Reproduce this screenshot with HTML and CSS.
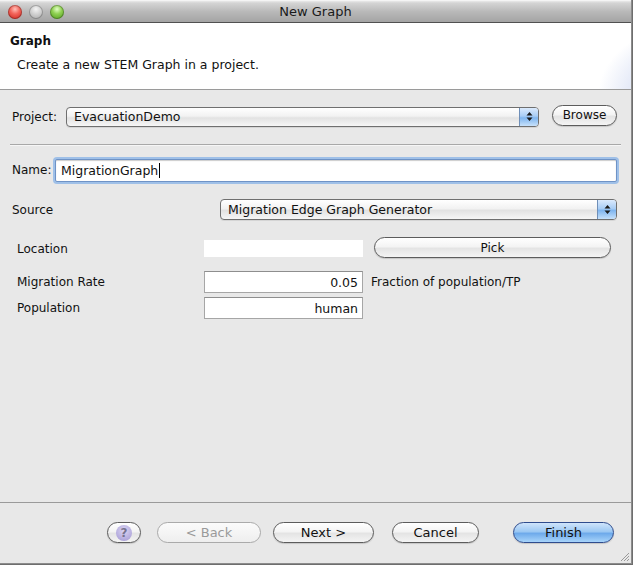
FILE: index.html
```html
<!DOCTYPE html>
<html>
<head>
<meta charset="utf-8">
<title>New Graph</title>
<link rel="stylesheet" href="styles.css">
</head>
<body>
<div class="window">
  <div class="titlebar">
    <div class="lights">
      <span class="light red"></span>
      <span class="light gray"></span>
      <span class="light green"></span>
    </div>
    <div class="title">New Graph</div>
  </div>
  <div class="header">
    <div class="h-title">Graph</div>
    <div class="h-desc">Create a new STEM Graph in a project.</div>
  </div>
  <div class="content">
    <div class="row project-row">
      <span class="lbl">Project:</span>
      <div class="combo project-combo">
        <span class="combo-text">EvacuationDemo</span>
        <span class="combo-arrow"><svg width="9" height="13" viewBox="0 0 9 13"><path d="M4.5 2 L7.5 5.5 L1.5 5.5 Z M4.5 11 L7.5 7.5 L1.5 7.5 Z" fill="#1a1a1a"/></svg></span>
      </div>
      <button class="btn browse">Browse</button>
    </div>
    <div class="sep"></div>
    <div class="row name-row">
      <span class="lbl">Name:</span>
      <div class="field focus"><span>MigrationGraph</span><span class="caret"></span></div>
    </div>
    <div class="row source-row">
      <span class="lbl">Source</span>
      <div class="combo source-combo">
        <span class="combo-text">Migration Edge Graph Generator</span>
        <span class="combo-arrow"><svg width="9" height="13" viewBox="0 0 9 13"><path d="M4.5 2 L7.5 5.5 L1.5 5.5 Z M4.5 11 L7.5 7.5 L1.5 7.5 Z" fill="#1a1a1a"/></svg></span>
      </div>
    </div>
    <div class="params">
      <span class="plbl loc-lbl">Location</span>
      <div class="pfield plain loc-field"></div>
      <button class="btn pick">Pick</button>
      <span class="plbl">Migration Rate</span>
      <div class="pfield">0.05</div>
      <span class="unit">Fraction of population/TP</span>
      <span class="plbl">Population</span>
      <div class="pfield">human</div>
      <span></span>
    </div>
  </div>
  <div class="footer">
    <button class="btn help"><span class="qmark">?</span></button>
    <button class="btn back" disabled>&lt; Back</button>
    <button class="btn next">Next &gt;</button>
    <button class="btn cancel">Cancel</button>
    <button class="btn finish">Finish</button>
    <svg class="grip" width="11" height="11" viewBox="0 0 11 11"><path d="M10 2 L2 10 M10 5 L5 10 M10 8 L8 10" stroke="#999" stroke-width="1"/></svg>
  </div>
</div>
</body>
</html>
```
FILE: styles.css
```css
* { box-sizing: border-box; }
html, body { margin: 0; padding: 0; }
body {
  background: #6e6e6e;
  font-family: "DejaVu Sans", "Liberation Sans", sans-serif;
  font-size: 12px;
  color: #111;
  width: 633px;
  height: 565px;
  overflow: hidden;
}
.window {
  width: 632px;
  height: 564px;
  background: #e8e8e8;
  border-right: 1px solid #8c8c8c;
  border-bottom: 1px solid #8c8c8c;
  display: flex;
  flex-direction: column;
}
.titlebar {
  height: 23px;
  flex: none;
  background: linear-gradient(#e9e9e9 0, #d4d4d4 2px, #b9b9b9 50%, #a4a4a4 100%);
  border-top: 1px solid #f4f4f4;
  border-bottom: 1px solid #515151;
  display: flex;
  align-items: center;
  position: relative;
}
.lights { display: flex; gap: 7px; padding-left: 8px; }
.light {
  width: 14px; height: 14px; border-radius: 50%;
  box-shadow: inset 0 0 0 1px rgba(0,0,0,0.25);
}
.light.red { background: radial-gradient(circle at 50% 30%, #ffc0b8 0, #f3645a 40%, #c81f17 100%); }
.light.gray { background: radial-gradient(circle at 50% 30%, #f4f4f4 0, #cfcfcf 45%, #a5a5a5 100%); }
.light.green { background: radial-gradient(circle at 50% 30%, #e1ffc4 0, #8fd052 40%, #4d9a19 100%); }
.title {
  position: absolute; left: 0; right: 0; top: 3px;
  text-align: center;
  font-size: 13px;
  color: #1a1a1a;
}
.header {
  height: 67px;
  flex: none;
  background: radial-gradient(ellipse 120px 90px at 110% 110%, #dfe6f6 0, #e6ebf8 55%, rgba(255,255,255,0) 80%), #fff;
  border-bottom: 1px solid #9a9a9a;
  padding: 11px 0 0 10px;
}
.h-title { font-weight: bold; font-size: 12px; }
.h-desc { margin: 9px 0 0 7px; font-size: 12.5px; }
.content {
  flex: 1;
  padding: 16px 14px 0 12px;
}
.row { display: flex; align-items: center; }
.lbl { flex: none; }
.project-row { height: 21px; }
.project-row .lbl { width: 54px; }
.combo {
  height: 20px;
  border: 1px solid #6f6f6f;
  border-radius: 4px;
  background: linear-gradient(#ffffff 0, #f2f2f2 45%, #e2e2e2 55%, #f6f6f6 100%);
  display: flex;
  align-items: center;
  overflow: hidden;
  box-shadow: 0 1px 0 rgba(0,0,0,0.08);
}
.combo-text { flex: 1; padding-left: 7px; font-size: 12.5px; }
.combo-arrow {
  width: 19px; height: 100%;
  background: linear-gradient(#dbeafd 0, #a8cdf5 45%, #7fb5ef 55%, #c8e2fb 100%);
  border-left: 1px solid #6f8fb8;
  display: flex; align-items: center; justify-content: center;
}
.project-combo { width: 473px; }
.btn {
  font-family: inherit;
  font-size: 12px;
  color: #111;
  height: 21px;
  border: 1px solid #5c5c5c;
  border-radius: 11px;
  background: linear-gradient(#ffffff 0, #f4f4f4 45%, #e4e4e4 55%, #f4f4f4 100%);
  padding: 0;
  box-shadow: 0 1px 1px rgba(0,0,0,0.15);
}
.browse { margin-left: 13px; width: 65px; height: 21px; margin-top: -3px; }
.sep {
  background: #a8a8a8;
  border-bottom: 1px solid #f6f6f6;
  margin: 17px -4px 0 -2px;
  height: 2px;
}
.name-row { margin-top: 12px; height: 24px; }
.name-row .lbl { width: 43px; }
.field.focus {
  width: 564px;
  height: 23px;
  background: #fff;
  border: 1px solid #6f93c6;
  box-shadow: 0 0 0 2px #9fc0e8, inset 0 1px 1px rgba(0,0,0,0.2);
  border-radius: 2px;
  display: flex; align-items: center;
  padding-left: 5px;
  font-size: 12.5px;
}
.caret { width: 1px; height: 15px; background: #000; margin-left: 1px; }
.source-row { margin-top: 17px; height: 21px; }
.source-row .lbl { width: 208px; }
.source-combo { width: 399px; height: 21px; }
.params {
  margin-top: 17px;
  padding-left: 5px;
  display: grid;
  grid-template-columns: 187px 160px auto;
  grid-template-rows: 30px 22px 22px;
  row-gap: 4px;
  align-items: center;
}
.plbl { font-size: 12px; }
.loc-lbl { align-self: start; margin-top: 5px; }
.pfield {
  width: 159px;
  height: 22px;
  background: #fff;
  border: 1px solid #a6a6a6;
  border-top-color: #8e8e8e;
  text-align: right;
  padding-right: 4px;
  line-height: 21px;
  font-size: 12.5px;
}
.pfield.plain { border: none; height: 17px; align-self: start; margin-top: 3px; }
.pick { width: 237px; margin-left: 10px; height: 21px; align-self: start; }
.unit { margin-left: 7px; }
.footer {
  height: 61px;
  flex: none;
  border-top: 1px solid #9a9a9a;
  display: flex;
  align-items: flex-start;
  padding: 19px 0 0 107px;
  position: relative;
}
.footer .btn { font-size: 13px; }
.help { width: 34px; display: flex; align-items: center; justify-content: center; }
.qmark {
  width: 16px; height: 16px; border-radius: 50%;
  background: radial-gradient(circle at 50% 35%, #dcd6f4 0, #b2a9dc 70%, #978dc8 100%);
  color: #77738e;
  font-weight: bold;
  font-size: 12px;
  line-height: 16px;
  text-align: center;
}
.back { width: 104px; margin-left: 16px; border-color: #aaaaaa; color: #9a9a9a; box-shadow: none; background: linear-gradient(#fbfbfb, #eeeeee); }
.next { width: 101px; margin-left: 12px; }
.cancel { width: 87px; margin-left: 18px; }
.finish {
  width: 101px; margin-left: 34px;
  border-color: #2f4c8d;
  background: linear-gradient(#cfe4fb 0, #9cc8f3 45%, #6eaaeb 55%, #a8d4fa 100%);
}
.grip { position: absolute; right: 1px; bottom: 1px; }
```
